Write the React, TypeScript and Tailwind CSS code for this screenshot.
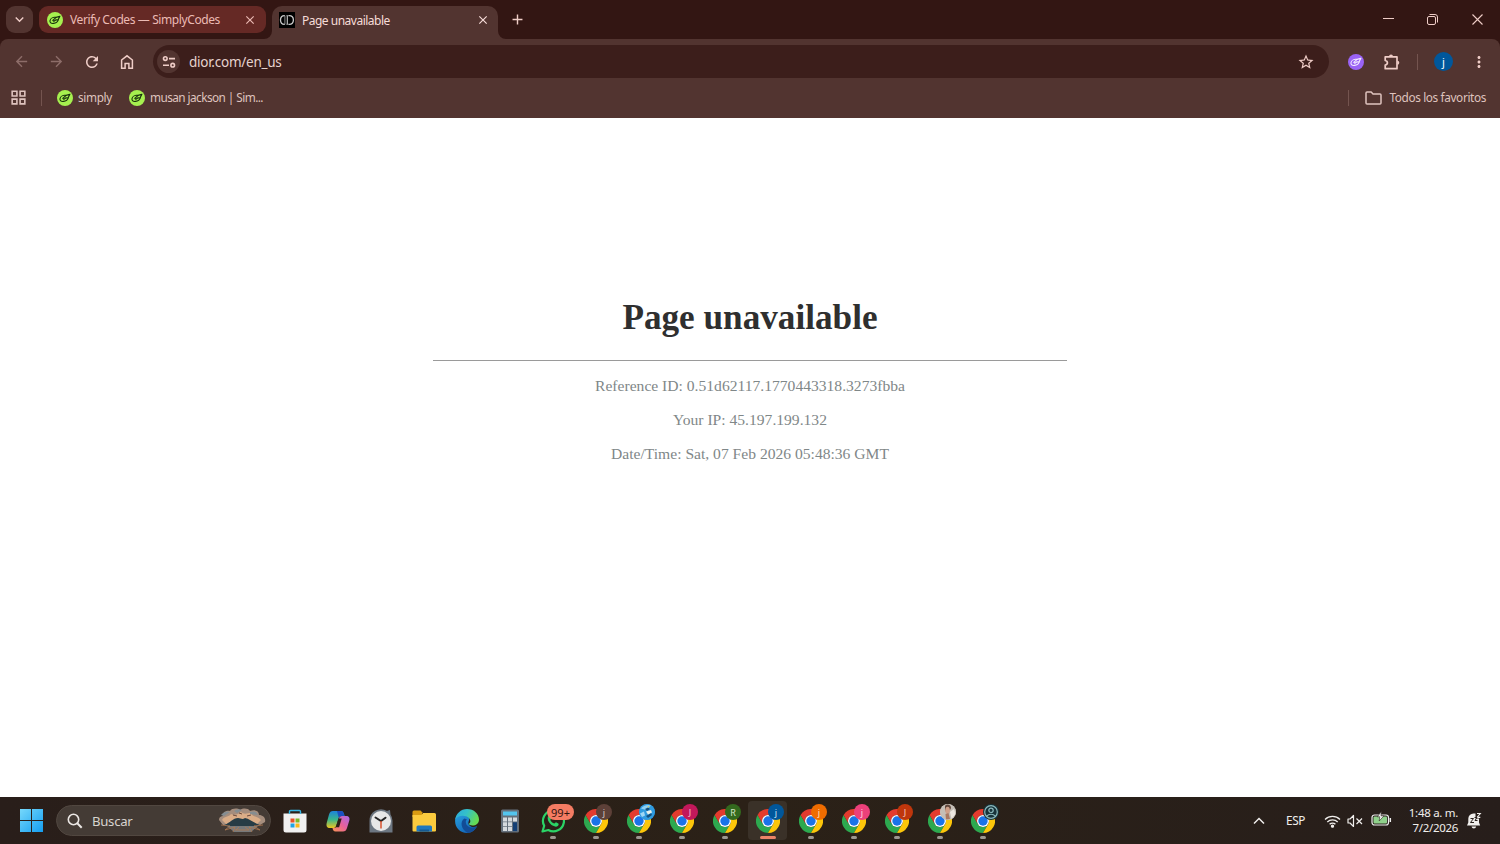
import type { ReactNode } from 'react'
import {
  MdAdd,
  MdArrowBack,
  MdArrowForward,
  MdClose,
  MdKeyboardArrowDown,
  MdMoreVert,
  MdOutlineGridView,
  MdRefresh,
  MdStarBorder
} from 'react-icons/md'

interface ChromeWindow {
  id: string
  badge: ReactNode
  color: string
  active?: boolean
}

const details = [
  'Reference ID: 0.51d62117.1770443318.3273fbba',
  'Your IP: 45.197.199.132',
  'Date/Time: Sat, 07 Feb 2026 05:48:36 GMT'
]

const chromeWindows: ChromeWindow[] = [
  { id: 'brown', badge: 'j', color: 'bg-[#5d4038] text-[#d8c8c4]' },
  { id: 'bird', badge: <BirdAvatar />, color: 'bg-[#2d8fd0]' },
  { id: 'magenta', badge: 'J', color: 'bg-[#c2185b] text-[#f5c4d6]' },
  { id: 'green', badge: 'R', color: 'bg-[#33691e] text-[#d3e6c8]' },
  { id: 'blue', badge: 'j', color: 'bg-[#01579b] text-[#cfe3f2]', active: true },
  { id: 'orange', badge: 'j', color: 'bg-[#ef6c00] text-[#ffe0c0]' },
  { id: 'pink', badge: 'j', color: 'bg-[#ec407a] text-[#ffd5e2]' },
  { id: 'rust', badge: 'J', color: 'bg-[#bf360c] text-[#f4cdbf]' },
  { id: 'photo', badge: <PhotoAvatar />, color: 'bg-[#cfc6bd]' },
  { id: 'guest', badge: <GuestAvatar />, color: 'bg-[#17333a]' }
]

function SimplyIcon({ bg = '#a6f04f', fg = '#17300c', size = 16 }) {
  return (
    <svg width={size} height={size} viewBox="0 0 16 16" fill="none" className="shrink-0">
      <circle cx="8" cy="8" r="8" fill={bg} />
      <g stroke={fg} strokeWidth="1.1" strokeLinecap="round" strokeLinejoin="round">
        <path d="M8.600 5.400C5.800 5 3.400 6.600 3 8.600c-.4 2 1.200 3.100 3.400 2.800 2.400-.3 4.300-1.700 4.800-3.600" />
        <path d="M5.800 8.300l1.100 1 2.200-1.500 1.900.2 1.900-3.700-3.800 1.100z" />
      </g>
    </svg>
  )
}

function DiorIcon() {
  return (
    <svg width="16" height="16" viewBox="0 0 16 16" className="shrink-0">
      <path fill="#000" d="M0 0h16v16H0z" />
      <g fill="none" stroke="#c9c9c9">
        <path strokeWidth="1.300" d="M5.800 3.700C2.800 3.500 1.500 5.400 1.500 8s1.300 4.500 4.300 4.300" />
        <path strokeWidth="1.300" d="M9.800 3.700c3.200-.2 4.600 1.700 4.600 4.300s-1.400 4.500-4.600 4.300" />
        <path strokeWidth="1.100" d="M8.300 3.700v8.600" />
        <path strokeWidth=".7" d="M5.900 3.700v8.600M7.300 3.700h2.600M7.300 12.300h2.600" />
      </g>
    </svg>
  )
}

function HomeIcon() {
  return (
    <svg width="14" height="16" viewBox="0 0 14 16" fill="none" stroke="currentColor" strokeWidth="1.5">
      <path d="M1.600 6L7 1.800 12.400 6v8.200H8.900V9.400H5.100v4.800H1.600z" />
    </svg>
  )
}

function TuneIcon() {
  return (
    <svg width="14" height="14" viewBox="0 0 14 14" fill="none" stroke="currentColor" strokeWidth="1.6">
      <circle cx="3.300" cy="3.600" r="1.800" />
      <circle cx="10.700" cy="10.200" r="1.800" />
      <path d="M7 3.600h6M1 10.200h6" />
    </svg>
  )
}

function PuzzleIcon() {
  return (
    <svg width="18" height="18" viewBox="0 0 18 18" fill="none">
      <path
        stroke="currentColor"
        strokeWidth="1.700"
        strokeLinejoin="round"
        d="M2.200 3.900h11.800v11.800H2.200v-3.600c1.500-.3 2.200-1.200 2.200-2.300S3.700 7.800 2.200 7.500z"
      />
      <path fill="currentColor" d="M6 3.500a2 2 0 014 0zM14.300 7.700a2 2 0 010 4z" />
    </svg>
  )
}

function BookmarkFolderIcon() {
  return (
    <svg width="17" height="14" viewBox="0 0 17 14" fill="none" stroke="currentColor" strokeWidth="1.500" strokeLinejoin="round">
      <path d="M1 2Q1 1 2 1h4.200l1.800 2h7q1 0 1 1v8q0 1-1 1H2q-1 0-1-1z" />
    </svg>
  )
}

function ChromeLogo() {
  return (
    <svg width="24" height="24" viewBox="0 0 24 24">
      <path fill="#2da94f" d="M6.800 15L1.600 6A12 12 0 0012 24l5.200-9A6 6 0 016.800 15z" />
      <path fill="#e33b2e" d="M12 6h10.400A12 12 0 001.600 6l5.200 9A6 6 0 0112 6z" />
      <path fill="#fdc60a" d="M17.200 15L12 24A12 12 0 0022.400 6H12a6 6 0 015.200 9z" />
      <circle cx="12" cy="12" r="6" fill="#fff" />
      <circle cx="12" cy="12" r="4.700" fill="#1a73e8" />
    </svg>
  )
}

function BirdAvatar() {
  return (
    <svg width="16" height="16" viewBox="0 0 16 16">
      <circle cx="8" cy="8" r="8" fill="#2f9be0" />
      <path fill="#8fd0f3" d="M2 4.500C4 1.500 9 .2 12 1.600L7 6z" />
      <path fill="#15507f" d="M6 5l3-1.500L11 5 8 7zM7 12l5-3 1 2-4 3z" />
      <path fill="#e8f0ea" d="M7 7.500l5-1.500 1 2.500-4 2z" />
      <path fill="#9fd7f5" d="M1 9.500l4-2 1 4-3 1.500z" />
      <path fill="#e5c94a" d="M8 3l2-1 .5 1.500z" />
    </svg>
  )
}

function PhotoAvatar() {
  return (
    <svg width="16" height="16" viewBox="0 0 16 16">
      <circle cx="8" cy="8" r="8" fill="#c4beb6" />
      <path fill="#5f463b" d="M5 2c2-2.500 6-1.500 6 2l-1 2-4-1-1 3z" />
      <ellipse cx="7.600" cy="6.200" rx="2.300" ry="3.500" fill="#cf9f88" />
      <path fill="#ece7e1" d="M10 8l4-3 1.500 5-4 5z" />
      <path fill="#a87862" d="M5.500 10l3-1 1.500 6-4 .5z" />
    </svg>
  )
}

function GuestAvatar() {
  return (
    <svg width="16" height="16" viewBox="0 0 16 16" fill="none" stroke="#8bb9bd" strokeWidth="1.200">
      <circle cx="8" cy="8" r="6.300" />
      <circle cx="8" cy="6.300" r="2.200" />
      <path d="M3.600 12.200c2.400-2.600 6.400-2.600 8.800 0" />
    </svg>
  )
}

function Tab({ icon, title }: { icon: ReactNode; title: string }) {
  return (
    <div className="ml-[6px] flex h-[27px] w-[227px] items-center rounded-[9px] bg-[#652925] pr-[9px] pl-2 text-[#ebbab4]">
      {icon}
      <span className="ml-[7px] flex-1 pt-px text-[12px] tracking-[-0.4px] whitespace-nowrap">{title}</span>
      <MdClose size={14} />
    </div>
  )
}

function BrowserHeader() {
  return (
    <header className="h-[118px] bg-[#331613] text-[#efcdc7]">
      <div className="flex h-[39px] items-start pt-[6px] pl-[6px]">
        <button className="flex size-[27px] items-center justify-center rounded-[9px] bg-[#523430]">
          <MdKeyboardArrowDown size={17} />
        </button>
        <Tab icon={<SimplyIcon />} title="Verify Codes — SimplyCodes" />
        <div className="relative ml-[6px] flex h-[33px] w-[226px] items-start rounded-t-[10px] bg-[#523430] pt-[6px] pr-[8px] pl-[7px] text-[#f6dcd8]">
          <svg width="8" height="8" className="absolute bottom-0 -left-2 fill-[#523430]">
            <path d="M8 0v8H0a8 8 0 008-8z" />
          </svg>
          <svg width="8" height="8" className="absolute -right-2 bottom-0 fill-[#523430]">
            <path d="M0 0v8h8a8 8 0 01-8-8z" />
          </svg>
          <DiorIcon />
          <span className="ml-[7px] flex-1 pt-px text-[12px] leading-4 tracking-[-0.5px]">Page unavailable</span>
          <MdClose size={14} className="mt-[1px]" />
        </div>
        <MdAdd size={17} className="mt-[5px] ml-[11px]" />
        <div className="ml-auto flex h-[27px] items-center">
          <svg width="11" height="11" viewBox="0 0 11 11" fill="none" stroke="currentColor" className="mr-[33px]">
            <path d="M0 4.500h11" />
          </svg>
          <svg width="11" height="11" viewBox="0 0 11 11" fill="none" stroke="currentColor" className="mr-[34px]">
            <rect x=".5" y="2.500" width="8" height="8" rx="1.500" />
            <path d="M2.500.5h5.500a2.500 2.500 0 012.500 2.500v5.500" />
          </svg>
          <svg width="11" height="11" viewBox="0 0 11 11" fill="none" stroke="currentColor" strokeWidth="1.100" className="mr-[17px]">
            <path d="M.5.5l10 10M10.500.5l-10 10" />
          </svg>
        </div>
      </div>

      <div className="h-[79px] rounded-t-[8px] bg-[#523430]">
        <div className="flex h-[45px] items-center pl-1">
          <span className="flex w-[35px] justify-center text-[#8d6d69]"><MdArrowBack size={17} /></span>
          <span className="flex w-[35px] justify-center text-[#8d6d69]"><MdArrowForward size={17} /></span>
          <span className="flex w-[35px] justify-center"><MdRefresh size={18} /></span>
          <span className="flex w-[35px] justify-center"><HomeIcon /></span>
          <div className="ml-[9px] flex h-[33px] w-[1176px] items-center rounded-full bg-[#3c1e1b] pr-[14px] pl-1">
            <span className="flex size-[23px] items-center justify-center rounded-full bg-[#523430]">
              <TuneIcon />
            </span>
            <span className="ml-[9px] flex-1 pt-[2px] text-[13.500px] tracking-[-0.25px] text-[#e6d2cd]">dior.com/en_us</span>
            <MdStarBorder size={18} />
          </div>
          <span className="ml-[19px]"><SimplyIcon bg="#9a63f5" fg="#f3eaff" /></span>
          <span className="ml-[19px]"><PuzzleIcon /></span>
          <span className="ml-[16px] h-4 w-px bg-[#74544f]" />
          <span className="ml-[16px] flex size-[19px] items-center justify-center rounded-full bg-[#01579b] text-[11px] leading-none text-white">j</span>
          <span className="ml-[17px]"><MdMoreVert size={18} /></span>
        </div>
        <div className="flex h-[27px] items-center pr-[14px] pl-[9px] text-[11.800px] whitespace-nowrap text-[#dfc3be]">
          <MdOutlineGridView size={19} />
          <span className="ml-[13px] h-4 w-px bg-[#74544f]" />
          <span className="ml-[15px] flex items-center gap-[5px] tracking-[-0.35px]"><SimplyIcon />simply</span>
          <span className="ml-[17px] flex items-center gap-[5px] tracking-[-0.560px]"><SimplyIcon />musan jackson | Sim...</span>
          <span className="ml-auto h-4 w-px bg-[#74544f]" />
          <span className="ml-[16px]"><BookmarkFolderIcon /></span>
          <span className="ml-[7px] tracking-[-0.370px]">Todos los favoritos</span>
        </div>
      </div>
    </header>
  )
}

function StoreIcon() {
  return (
    <svg width="24" height="24" viewBox="0 0 24 24">
      <path fill="#f1f1f1" d="M.5 4.500h23V21a2.500 2.500 0 01-2.500 2.500H3A2.500 2.500 0 01.5 21z" />
      <path fill="none" stroke="#35b6e6" strokeWidth="1.400" d="M6.500 5V2.500Q6.500 1.500 7.500 1.500h9q1 0 1 1V5" />
      <path fill="#e8532a" d="M7.500 9.500h4v4h-4z" />
      <path fill="#7eb928" d="M12.500 9.500h4v4h-4z" />
      <path fill="#21a3e4" d="M7.500 14.500h4v4h-4z" />
      <path fill="#fbb81c" d="M12.500 14.500h4v4h-4z" />
    </svg>
  )
}

function CopilotIcon() {
  return (
    <svg width="24" height="24" viewBox="0 0 24 24">
      <defs>
        <linearGradient id="cpLeft" x1="0" y1="0" x2="0" y2="1">
          <stop stopColor="#1c83dc" />
          <stop offset=".5" stopColor="#39b68b" />
          <stop offset="1" stopColor="#eec51f" />
        </linearGradient>
        <linearGradient id="cpRight" x1="1" y1="0" x2="0" y2="1">
          <stop stopColor="#a66be8" />
          <stop offset=".5" stopColor="#e8609a" />
          <stop offset="1" stopColor="#f99453" />
        </linearGradient>
      </defs>
      <path fill="url(#cpLeft)" d="M7 2h8c2 0 2.500 1.500 3 3l.5 2h-3c-2 0-2.500 1-3 2.500L10 17c-.5 1.500-1.500 2-3 2H4c-3 0-4-2-3.300-5L3 5.500C3.700 3 5 2 7 2z" />
      <path fill="url(#cpRight)" d="M17 22.500H9.500c-2 0-2.500-1.500-3-3.500H8c1.500 0 2.300-.8 2.700-2L13 9.500C13.500 8 14 7 16 7h4c3 0 4 2 3.300 4.500L21 19c-.7 2.500-2 3.500-4 3.500z" />
      <path fill="#1b4fc0" d="M11 2h4c2 0 2.500 1.500 3 3l.5 2h-3c-1.600 0-2.300.7-2.800 1.800z" />
      <path fill="#2b2117" d="M11.300 13.500l1.200-4h3.200l-2.600 8.700H9.700q.8-1.500 1.600-4.700z" />
    </svg>
  )
}

function ClockIcon() {
  return (
    <svg width="24" height="24" viewBox="0 0 24 24">
      <path fill="#6c7681" d="M.5 12A11.500 11.500 0 0118 2l3-1 .5 4.500a11 11 0 012 6.500v11.500H.5z" />
      <circle cx="12" cy="12" r="10" fill="#e7e7e7" />
      <path stroke="#252525" strokeWidth="2" strokeLinecap="round" d="M6.500 8.500L12 12l4.500-3.300" fill="none" />
      <path stroke="#d8512d" strokeWidth="1.500" d="M12 12v7.500" />
    </svg>
  )
}

function FolderIcon() {
  return (
    <svg width="24" height="24" viewBox="0 0 24 24">
      <path fill="#d99b12" d="M.5 3q0-1.500 1.500-1.500h6.500L11 4h-1v4H.5z" />
      <path fill="#fbcb3e" d="M.5 6h9L11 4h11.500q1.500 0 1.500 1.500v16q0 1-1 1H1.500q-1 0-1-1z" />
      <path fill="#1f78bd" d="M4.500 22.500V18q0-1.500 1.500-1.500h12.500q1.500 0 1.500 1.500v4.500z" />
      <path fill="#155a91" d="M7.500 22.500v-2h9.500v2z" />
    </svg>
  )
}

function EdgeIcon() {
  return (
    <svg width="24" height="24" viewBox="0 0 24 24">
      <defs>
        <linearGradient id="edgeTop" x1="0" y1="0" x2="1" y2=".4">
          <stop stopColor="#2ba8e0" />
          <stop offset=".5" stopColor="#35c1c8" />
          <stop offset="1" stopColor="#65da55" />
        </linearGradient>
        <linearGradient id="edgeBody" x1="0" y1="0" x2=".7" y2="1">
          <stop stopColor="#28a1df" />
          <stop offset="1" stopColor="#1263b6" />
        </linearGradient>
      </defs>
      <path fill="url(#edgeBody)" d="M.1 11.500C.3 7 4 5 8 5c5 0 7 3.500 6 6.500-2 4 1.500 7 5 6.500l3-.7C20 21.500 16.200 24 12 24 5 24-.2 18.300.1 11.500z" />
      <path fill="#124c96" d="M9.500 9.500c-5 3-3.500 11 3.500 14.400 4.100-.4 7.200-2.900 9-6.600-4.500 2.500-11.200 1-11.200-4.300 0-1.200.5-2 1.200-2.500z" />
      <path fill="url(#edgeTop)" d="M.1 11C.8 4.700 5.800 0 12 0c7 0 12 5 12 10.500 0 4-3.200 6-6.500 6-2 0-3.800-.8-3.500-1.700 2-1.500 1.700-4-.1-5.800C10.500 5.600 2.500 5.800.1 11z" />
    </svg>
  )
}

function CalculatorIcon() {
  return (
    <svg width="24" height="24" viewBox="0 0 24 24">
      <rect x="3" y=".5" width="18" height="23" rx="1.500" fill="#65707c" />
      <path fill="#53c5ef" d="M5 2.500h14v4H5z" />
      <path fill="#d5dade" d="M5 8.500h4v4H5zM10 8.500h4v4h-4zM15 8.500h4v4h-4zM5 13.300h4v4H5zM10 13.300h4v4h-4zM5 18.100h4v4H5zM10 18.100h4v4h-4z" />
      <path fill="#143f75" d="M15 13.300h4v8.800h-4z" />
    </svg>
  )
}

function WhatsAppIcon() {
  return (
    <svg width="24" height="24" viewBox="0 0 24 24">
      <path fill="none" stroke="#2bd366" strokeWidth="2.200" strokeLinejoin="round" d="M1.500 22.500l1.700-5.700A10.500 10.500 0 117.300 21z" />
      <path fill="#2bd366" d="M7 7.200c1-1.200 2-1 2.300-.2l.9 2.100c.2.600-.9 1.500-.9 1.900.9 1.700 2.200 2.900 4 3.600.5 0 1.200-1.400 1.700-1.300l2.300 1.200c.7.400.2 2-.6 2.600-1.300.9-2.900.7-5.200-.6C9 15.100 5.600 11 7 7.200z" />
    </svg>
  )
}

// mountain lake under clouds, shown at the right end of the search box
function SearchArt() {
  return (
    <svg width="48" height="26" viewBox="0 0 48 26">
      <path fill="#a58d7d" d="M1 12c0-3 2-4 4-4C4 4 9 2 12 3c2-3 8-3 10-1 3-2 8-2 10 1 5-2 9 0 9 4 4 0 7 3 6 7l-5 3H5z" />
      <path fill="#dbad87" d="M4 12c2-4 7-3 9-6 5 2 7 0 10-2 3 3 7 1 10 1 1 4 7 3 10 7l-4 4H8z" />
      <path fill="#858d91" d="M3 7q4-5 9-3l-6 4zM32 4q6-2 8 3l-8-1zM16 3q4-3 8-1l-5 3z" />
      <path fill="#273c45" d="M6 17c6-2 9-7 14-7 3 0 4 2 7 0 5 1 9 5 15 7l-9 2H14z" />
      <path stroke="#6b4a3d" d="M15 7l4 1M29 8l4-1M21 5l3 1" />
      <path fill="#77797a" d="M9 18h31l-7 6H16z" />
      <path stroke="#b07a52" strokeWidth=".8" d="M3 17l9 1-5 4 10-3-2 5M45 17l-9 1 6 4-11-3 3 5M17 22h14M21 19l-3 3M27 19l4 3" fill="none" />
    </svg>
  )
}

function TaskSlot({ children }: { children: ReactNode }) {
  return <div className="flex w-[43px] items-center justify-center">{children}</div>
}

function Indicator({ active = false }) {
  return (
    <span className={`absolute bottom-[1px] left-1/2 h-[3px] -translate-x-1/2 rounded-full ${active ? 'w-[16px] bg-[#ec8468]' : 'w-[6px] bg-[#9d9790]'}`} />
  )
}

function Tray() {
  return (
    <div className="ml-auto flex items-center text-[#f0eeec]">
      <svg width="12" height="8" viewBox="0 0 12 8" fill="none" stroke="currentColor" strokeWidth="1.500">
        <path d="M1 6.500l5-5 5 5" />
      </svg>
      <span className="ml-[21px] w-5 text-[11.800px] tracking-[-0.4px]">ESP</span>
      <svg width="17" height="14" viewBox="0 0 17 14" fill="none" stroke="currentColor" strokeWidth="1.300" className="ml-[18px]">
        <path d="M1 5.500a10.600 10.600 0 0115 0M3.300 8a7.300 7.300 0 0110.400 0M5.600 10.300a4.100 4.100 0 015.800 0" />
        <circle cx="8.500" cy="12.200" r="1" fill="currentColor" />
      </svg>
      <svg width="17" height="14" viewBox="0 0 17 14" fill="none" stroke="currentColor" strokeWidth="1.200" className="ml-[6px]">
        <path strokeLinejoin="round" d="M1 5h2l3.500-3.500v11L3 9H1z" />
        <path d="M9.500 4.500l5.500 5.500M15 4.500L9.500 10" />
      </svg>
      <svg width="21" height="16" viewBox="0 0 21 16" fill="none" className="mb-[3px] ml-[7px]">
        <rect x="1" y="4" width="16.500" height="10" rx="2.500" stroke="#eee" strokeWidth="1.200" />
        <rect x="2.500" y="5.500" width="13.500" height="7" rx="1" fill="#8fd18b" />
        <path stroke="#eee" strokeWidth="1.500" d="M19.300 7v4" />
        <path fill="#f5f5f5" stroke="#28201c" strokeWidth=".6" d="M10.300.5L6.300 5.800h2.500L8.200 10l4.800-5.200h-3z" />
      </svg>
      <div className="mb-[2px] ml-[14px] w-[52px] text-right text-[11.500px] leading-[15px] tracking-[-0.3px] whitespace-nowrap">
        <div>1:48 a. m.</div>
        <div>7/2/2026</div>
      </div>
      <svg width="16" height="17" viewBox="0 0 16 17" className="mr-[18px] ml-[8px]">
        <path fill="#f0eeec" d="M1 13.500l1.300-3V6.800A5.200 5.200 0 017.500 1.500h2v5h3.500v4l1.200 3zM5.500 14.500h4.700a2.400 2.400 0 01-4.700 0z" />
        <path fill="none" stroke="#28201c" d="M4.500 6.500h3l-3 4H8" />
        <path fill="none" stroke="#f0eeec" strokeWidth="1.100" d="M11 1.500h3.300L11 5.400h3.300" />
        <path fill="none" stroke="#28201c" d="M8.500 5.500H11L9 8.500h2.500" />
      </svg>
    </div>
  )
}

function Taskbar() {
  return (
    <footer className="flex h-[47px] bg-linear-to-r from-[#291e1a] via-[#2b2117] to-[#271e1b]">
      <div className="flex w-[56px] items-center pl-5">
        <svg width="23" height="23" viewBox="0 0 23 23">
          <defs>
            <linearGradient id="winLogo" x1="0" y1="0" x2="23" y2="23" gradientUnits="userSpaceOnUse">
              <stop stopColor="#76d8fb" />
              <stop offset="1" stopColor="#149df0" />
            </linearGradient>
          </defs>
          <path fill="url(#winLogo)" d="M0 0h11v11H0zM12 0h11v11H12zM0 12h11v11H0zM12 12h11v11H12z" />
        </svg>
      </div>
      <div className="mt-2 flex h-[31px] w-[215px] items-center rounded-full border border-[#514740] bg-[#443b35] pr-[4px] pl-[10px]">
        <svg width="16" height="16" viewBox="0 0 16 16" fill="none" stroke="#ebe7e4" strokeWidth="1.600">
          <circle cx="6.500" cy="6.500" r="5.200" />
          <path strokeWidth="2" d="M10.300 10.300l4.400 4.400" />
        </svg>
        <span className="ml-[9px] flex-1 pt-[2px] text-[13.200px] tracking-[-0.3px] text-[#d8d3cf]">Buscar</span>
        <SearchArt />
      </div>
      <div className="ml-[2px] flex">
        <TaskSlot><StoreIcon /></TaskSlot>
        <TaskSlot><CopilotIcon /></TaskSlot>
        <TaskSlot><ClockIcon /></TaskSlot>
        <TaskSlot><FolderIcon /></TaskSlot>
        <TaskSlot><EdgeIcon /></TaskSlot>
        <TaskSlot><CalculatorIcon /></TaskSlot>
        <TaskSlot>
          <div className="relative flex h-[39px] w-[39px] items-center justify-center">
            <WhatsAppIcon />
            <span className="absolute top-[3px] left-[14px] flex h-[16px] w-[27px] items-center justify-center rounded-full bg-[#f47c63] text-[11px] leading-none text-[#32150f]">
              99+
            </span>
            <Indicator />
          </div>
        </TaskSlot>
        {chromeWindows.map(win => (
          <TaskSlot key={win.id}>
            <div className={`relative flex h-[39px] w-[39px] items-center justify-center rounded ${win.active ? 'bg-[#3a3128]' : ''}`}>
              <ChromeLogo />
              <span className={`absolute top-[3px] left-[20px] flex size-4 items-center justify-center overflow-hidden rounded-full text-[9px] leading-none ${win.color}`}>
                {win.badge}
              </span>
              <Indicator active={win.active} />
            </div>
          </TaskSlot>
        ))}
      </div>
      <Tray />
    </footer>
  )
}

export default function App() {
  return (
    <div className="flex h-[844px] w-[1500px] flex-col overflow-hidden bg-white font-['Noto_Sans','Open_Sans',sans-serif]">
      <BrowserHeader />
      <main className="flex flex-1 flex-col items-center pt-[179px] font-['Liberation_Serif','Times_New_Roman',serif]">
        <h1 className="text-[35.200px] leading-[41px] font-bold text-[#2f2f2f]">Page unavailable</h1>
        <hr className="mt-[22px] w-[634px] border-t border-[#9a9a9a]" />
        <div className="mt-[16.400px] flex flex-col items-center gap-[15.600px] text-[15.600px] leading-[18px] text-[#7f8788]">
          {details.map(line => (
            <p key={line}>{line}</p>
          ))}
        </div>
      </main>
      <Taskbar />
    </div>
  )
}
